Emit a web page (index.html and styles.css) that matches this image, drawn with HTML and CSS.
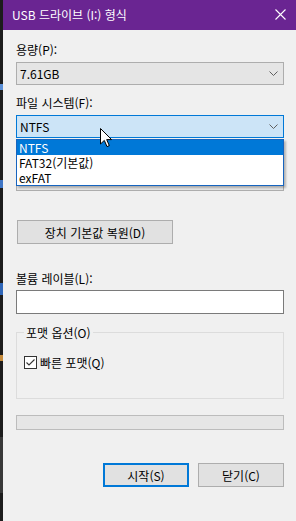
FILE: index.html
```html
<!DOCTYPE html>
<html lang="ko">
<head>
<meta charset="utf-8">
<title>USB 드라이브 (I:) 형식</title>
<link rel="stylesheet" href="styles.css">
</head>
<body>
<div class="screen">
  <div class="bgstrip">
    <span class="frag f1"></span><span class="frag f2"></span><span class="frag f3"></span><span class="frag f4"></span><span class="frag f5"></span>
  </div>
  <div class="window">
    <div class="titlebar">
      <span class="title">USB 드라이브 (I:) 형식</span>
      <svg class="close" width="11" height="11" viewBox="0 0 11 11"><path d="M0.5 0.5L10.5 10.5M10.5 0.5L0.5 10.5" stroke="#fff" stroke-width="1.1" fill="none"/></svg>
    </div>
    <div class="body">
      <div class="lbl">용량(P):</div>
      <div class="combo"><span>7.61GB</span><svg class="chev" width="9" height="5" viewBox="0 0 9 5"><path d="M0.5 0.5L4.5 4.5L8.5 0.5" stroke="#606060" fill="none"/></svg></div>

      <div class="lbl">파일 시스템(F):</div>
      <div class="combo-wrap">
        <div class="combo focus"><span>NTFS</span><svg class="chev" width="9" height="5" viewBox="0 0 9 5"><path d="M0.5 0.5L4.5 4.5L8.5 0.5" stroke="#606060" fill="none"/></svg></div>
        <ul class="dropdown">
          <li class="sel">NTFS</li>
          <li>FAT32(기본값)</li>
          <li>exFAT</li>
        </ul>
      </div>

      <div class="lbl">할당 단위 크기(A):</div>
      <div class="combo"><span>4096 바이트</span><svg class="chev" width="9" height="5" viewBox="0 0 9 5"><path d="M0.5 0.5L4.5 4.5L8.5 0.5" stroke="#606060" fill="none"/></svg></div>

      <button class="btn restore">장치 기본값 복원(D)</button>

      <div class="lbl lbl-vol">볼륨 레이블(L):</div>
      <div class="textbox"></div>

      <fieldset class="group">
        <legend>포맷 옵션(O)</legend>
        <div class="check">
          <span class="box"><svg width="11" height="11" viewBox="0 0 11 11"><path d="M1.5 5.5L4 8L9.5 2.5" stroke="#333" stroke-width="1.1" fill="none"/></svg></span>
          <span>빠른 포맷(Q)</span>
        </div>
      </fieldset>

      <div class="progress"></div>

      <div class="actions">
        <button class="btn primary">시작(S)</button>
        <button class="btn">닫기(C)</button>
      </div>
    </div>
  </div>
  <svg class="cursor" width="13" height="20" viewBox="0 0 13 20"><path d="M0.5 0.5L0.5 16L4.3 12.4L7 18.6L9.3 17.6L6.7 11.6L11.6 11.6Z" fill="#fff" stroke="#000" stroke-width="1" stroke-linejoin="miter"/></svg>
</div>
</body>
</html>
```

FILE: styles.css
```css
* { box-sizing: border-box; }
html, body { margin: 0; padding: 0; }
body {
  width: 296px;
  height: 521px;
  overflow: hidden;
  background: #1e1e1e;
  font-family: "Noto Sans CJK KR", "Noto Sans", sans-serif;
  font-size: 12px;
  color: #000;
}
.screen {
  position: relative;
  display: flex;
  width: 296px;
  height: 521px;
}
.bgstrip {
  position: relative;
  width: 3px;
  flex: none;
  background: #1c1c1c;
}
.frag { position: absolute; left: 0; width: 3px; }
.f1 { top: 84px; height: 6px; background: #5b8fd6; }
.f2 { top: 180px; height: 8px; background: #3d74c4; }
.f3 { top: 283px; height: 12px; background: #2f66b8; }
.f4 { top: 355px; height: 6px; background: #c58a3a; }
.f5 { top: 437px; height: 56px; background: #383838; }
.window {
  flex: 1;
  background: #f0f0f0;
  display: flex;
  flex-direction: column;
}
.titlebar {
  height: 30px;
  background: #6a2592;
  color: #fff;
  display: flex;
  align-items: center;
  justify-content: space-between;
  padding: 0 10px 1px 9px;
  flex: none;
}
.title { font-size: 12px; line-height: 15px; }
.close { display: block; margin-top: 0; }
.body {
  padding: 12px 12px 0 13px;
  display: flex;
  flex-direction: column;
}
.lbl {
  line-height: 15px;
  height: 15px;
  margin-bottom: 5px;
}
.combo {
  height: 23px;
  border: 1px solid #adadad;
  background: #e5e5e5;
  display: flex;
  align-items: center;
  justify-content: space-between;
  padding: 0 5px 0 3px;
  margin-bottom: 10px;
  line-height: 15px;
}
.combo.focus {
  border-color: #0078d7;
  background: #cce4f7;
}
.chev { display: block; }
.combo-wrap { position: relative; }
.dropdown {
  position: absolute;
  left: 0;
  right: 0;
  top: 24px;
  margin: 0;
  padding: 0;
  list-style: none;
  background: #fff;
  border: 1px solid #1664bf;
  box-shadow: 2px 2px 2px rgba(0,0,0,0.25);
  z-index: 2;
}
.dropdown li {
  height: 15px;
  line-height: 15px;
  padding-left: 2px;
}
.dropdown li.sel {
  background: #0078d7;
  color: #fff;
}
.btn {
  font-family: inherit;
  font-size: 12px;
  color: #000;
  background: #e1e1e1;
  border: 1px solid #adadad;
  height: 24px;
  line-height: 15px;
  padding: 0;
}
.restore {
  width: 156px;
  margin: 19px 0 0 1px;
  height: 24px;
}
.lbl-vol { margin-top: 27px; margin-bottom: 4px; }
.textbox {
  height: 24px;
  border: 1px solid #7a7a7a;
  background: #fff;
}
.group {
  margin: 11px 0 0 0;
  padding: 0 0 0 7px;
  border: 1px solid #dcdcdc;
  height: 74px;
  min-width: 0;
}
.group legend {
  padding: 0 2px;
  margin-left: 0;
  line-height: 15px;
}
.check {
  display: flex;
  align-items: center;
  gap: 3px;
  margin-top: 15px;
  line-height: 15px;
}
.box {
  width: 13px;
  height: 13px;
  border: 1px solid #333;
  background: #fff;
  display: flex;
  align-items: center;
  justify-content: center;
}
.box svg { display: block; }
.progress {
  margin-top: 16px;
  height: 15px;
  border: 1px solid #bcbcbc;
  background: #e6e6e6;
}
.actions {
  margin-top: 33px;
  display: flex;
  justify-content: flex-end;
  gap: 9px;
}
.actions .btn { width: 86px; }
.btn.primary {
  border: 2px solid #0078d7;
}
.cursor {
  position: absolute;
  left: 100px;
  top: 128px;
  z-index: 5;
}
```
